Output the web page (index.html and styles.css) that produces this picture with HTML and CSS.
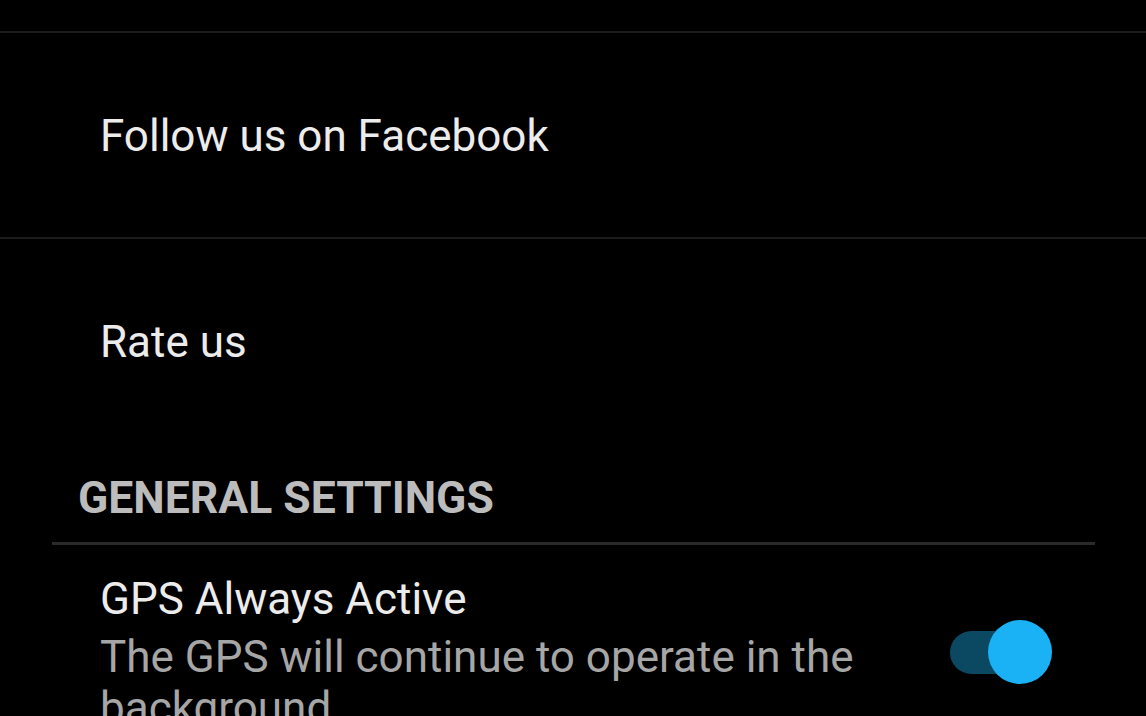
FILE: index.html
```html
<!DOCTYPE html>
<html lang="en">
<head>
    <meta charset="UTF-8">
    <meta name="viewport" content="width=device-width, initial-scale=1.0">
    <title>Settings</title>
    <link rel="stylesheet" href="styles.css">
</head>
<body>
    <div class="screen">
        <div class="rule"></div>
        <div class="item">Follow us on Facebook</div>
        <div class="rule"></div>
        <div class="item">Rate us</div>

        <div class="category">
            <div class="categoryTitle">GENERAL SETTINGS</div>
        </div>

        <div class="pref">
            <div class="prefText">
                <div class="prefTitle">GPS Always Active</div>
                <div class="prefSummary">The GPS will continue to operate in the background</div>
            </div>
            <div class="switch on">
                <div class="track"></div>
                <div class="thumb"></div>
            </div>
        </div>
    </div>
</body>
</html>
```

FILE: styles.css
```css
body {
    margin: 0;
    background-color: #000;
    font-family: Roboto, "Noto Sans", sans-serif;
    overflow: hidden;
}

.screen {
    width: 1146px;
    height: 716px;
    overflow: hidden;
    padding-top: 31px;
    box-sizing: border-box;
}

.rule {
    height: 2px;
    background-color: #1c1c1c;
}

.item {
    height: 204px;
    display: flex;
    align-items: center;
    padding-left: 100px;
    padding-top: 2px;
    box-sizing: border-box;
    font-size: 44px;
    color: #ececec;
}

.category {
    margin: 0 51px 0 52px;
    padding: 28px 0 17px 26px;
    border-bottom: 3px solid #2a2a2a;
}
.categoryTitle {
    font-size: 44.5px;
    line-height: 54px;
    font-weight: bold;
    color: #bcbcbc;
}

.pref {
    display: flex;
    align-items: flex-start;
    padding: 28px 94px 0 100px;
}
.prefText {
    flex: 1;
    margin-right: 60px;
}
.prefTitle {
    font-size: 44px;
    line-height: 52px;
    color: #ececec;
}
.prefSummary {
    margin-top: 7px;
    font-size: 44px;
    line-height: 51px;
    color: #a6a6a6;
}

.switch {
    position: relative;
    width: 102px;
    height: 64px;
    margin-top: 47px;
    flex-shrink: 0;
}
.track {
    position: absolute;
    left: 0;
    top: 11px;
    width: 92px;
    height: 43px;
    border-radius: 22px;
    background-color: #0b4962;
}
.thumb {
    position: absolute;
    right: 0;
    top: 0;
    width: 64px;
    height: 64px;
    border-radius: 50%;
    background-color: #1ab2f5;
}
```
